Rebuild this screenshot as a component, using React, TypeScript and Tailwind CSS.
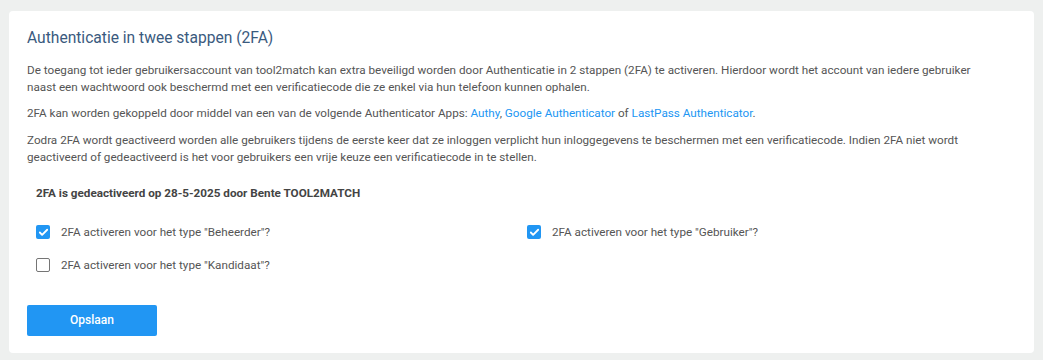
import { Check } from 'lucide-react';

type Option = { label: string; checked: boolean };

const options: Option[] = [
  { label: '2FA activeren voor het type "Beheerder"?', checked: true },
  { label: '2FA activeren voor het type "Gebruiker"?', checked: true },
  { label: '2FA activeren voor het type "Kandidaat"?', checked: false },
];

function CheckRow({ label, checked }: Option) {
  return (
    <label className="flex h-[20px] items-center gap-[11px]">
      {checked ? (
        <span className="grid h-[14px] w-[14px] place-items-center rounded-[2px] bg-[#2196f3]">
          <Check size={11} strokeWidth={4} className="text-white" aria-hidden="true" />
        </span>
      ) : (
        <span className="h-[14px] w-[14px] rounded-[2px] border border-[#757575] bg-white" />
      )}
      <span>{label}</span>
    </label>
  );
}

export default function App() {
  return (
    <div className="min-h-[360px] bg-[#eef0ef] px-[9px] pt-[11px] pb-[7px] font-['Roboto',sans-serif]">
      <section className="rounded-[4px] bg-white pt-[17px] pr-[40px] pb-[17px] pl-[18px] text-[11.7px] leading-[17px] text-[#555]">
        <h2 className="text-[15.6px] leading-[20px] text-[#3a5a7e]">Authenticatie in twee stappen (2FA)</h2>

        <p className="mt-[14px]">
          De toegang tot ieder gebruikersaccount van tool2match kan extra beveiligd worden door Authenticatie in 2 stappen
          (2FA) te activeren. Hierdoor wordt het account van iedere gebruiker naast een wachtwoord ook beschermd met een
          verificatiecode die ze enkel via hun telefoon kunnen ophalen.
        </p>
        <p className="mt-[9px]">
          2FA kan worden gekoppeld door middel van een van de volgende Authenticator Apps:{' '}
          <a className="text-[#2196f3]">Authy</a>, <a className="text-[#2196f3]">Google Authenticator</a> of{' '}
          <a className="text-[#2196f3]">LastPass Authenticator</a>.
        </p>
        <p className="mt-[10px]">
          Zodra 2FA wordt geactiveerd worden alle gebruikers tijdens de eerste keer dat ze inloggen verplicht hun
          inloggegevens te beschermen met een verificatiecode. Indien 2FA niet wordt geactiveerd of gedeactiveerd is het
          voor gebruikers een vrije keuze een verificatiecode in te stellen.
        </p>

        <p className="mt-[19px] pl-[9px] font-bold text-[#444]">2FA is gedeactiveerd op 28-5-2025 door Bente TOOL2MATCH</p>

        <div className="mt-[20px] grid grid-cols-[491px_1fr] gap-y-[13px] pl-[9px]">
          {options.map((o) => (
            <CheckRow key={o.label} {...o} />
          ))}
        </div>

        <button
          type="button"
          className="mt-[30px] h-[31px] w-[130px] rounded-[2px] bg-[#2196f3] text-[12px] font-medium text-white"
        >
          Opslaan
        </button>
      </section>
    </div>
  );
}
